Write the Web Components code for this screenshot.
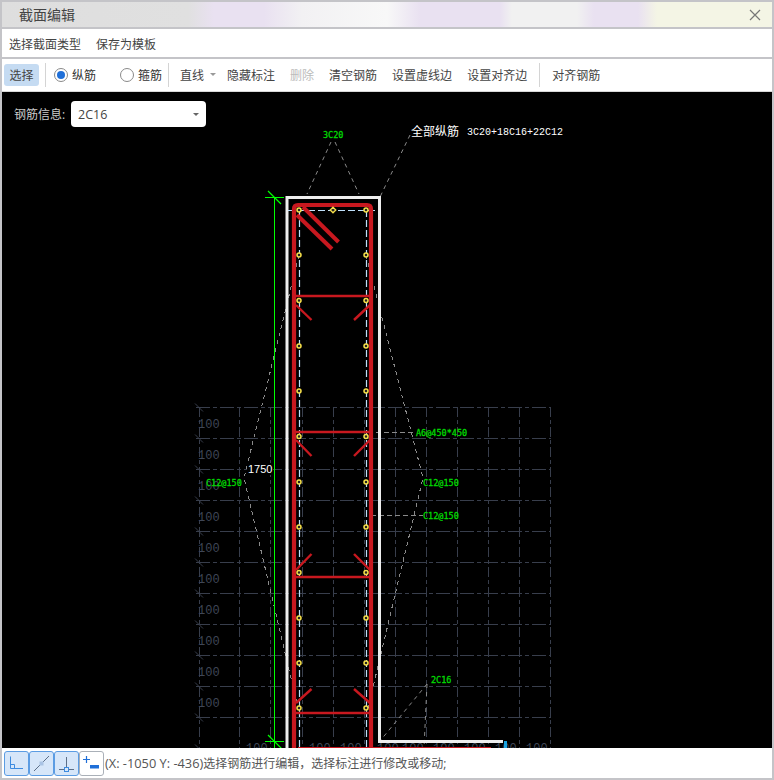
<!DOCTYPE html>
<html lang="zh">
<head>
<meta charset="utf-8">
<title>截面编辑</title>
<style>
    html, body { margin: 0; height: 100%; background: #c4c4c8; }
    body { font: 12px "Open Sans", "Noto Sans CJK SC", sans-serif; color: #444; overflow: hidden; }
</style>
</head>
<body>
<section-window>
    <title-bar slot="title">截面编辑</title-bar>
    <menu-bar slot="menu">
        <span>选择截面类型</span>
        <span>保存为模板</span>
    </menu-bar>
    <tool-bar slot="tools"></tool-bar>
    <section-canvas slot="canvas"></section-canvas>
    <status-bar slot="status"></status-bar>
</section-window>

<script>
class SectionWindow extends HTMLElement {
    constructor() {
        super();
        this.attachShadow({ mode: 'open' });
        this.shadowRoot.innerHTML = `
            <style>
                :host {
                    display: flex;
                    flex-direction: column;
                    width: 774px;
                    height: 780px;
                    box-sizing: border-box;
                    border: 2px solid #c4c4c8;
                    background: #c4c4c8;
                }
                ::slotted([slot="title"]) { margin-bottom: 2px; }
                ::slotted([slot="menu"]) { margin-bottom: 2px; }
            </style>
            <slot name="title"></slot>
            <slot name="menu"></slot>
            <slot name="tools"></slot>
            <slot name="canvas"></slot>
            <slot name="status"></slot>
        `;
    }
}

class TitleBar extends HTMLElement {
    constructor() {
        super();
        this.attachShadow({ mode: 'open' });
        this.shadowRoot.innerHTML = `
            <style>
                :host {
                    display: flex;
                    align-items: center;
                    justify-content: space-between;
                    height: 25px;
                    padding: 0 11px 0 17px;
                    font-size: 14px;
                    color: #444;
                    background: linear-gradient(90deg, #dedede 0, #e0e0e0 186px, #e9e1f1 212px, #e9e1f1 262px,
                        #f2f1f3 300px, #f8f8f8 385px, #e9e1f1 418px, #e9e1f1 498px, #f1f1f1 510px, #f1f1f1 575px,
                        #e9e1f1 592px, #e9e1f1 636px, #f4f5e5 655px, #f4f5e5 772px);
                }
                .text { transform: translateY(-1px); }
                svg { display: block; }
            </style>
            <span class="text"><slot></slot></span>
            <svg width="12" height="12" viewBox="0 0 12 12"><path d="M1 1 11 11M11 1 1 11" stroke="#777" stroke-width="1.2" fill="none"/></svg>
        `;
    }
}

class MenuBar extends HTMLElement {
    constructor() {
        super();
        this.attachShadow({ mode: 'open' });
        this.shadowRoot.innerHTML = `
            <style>
                :host {
                    display: flex;
                    align-items: center;
                    gap: 15px;
                    height: 28px;
                    box-sizing: border-box;
                    padding: 2px 7px 0;
                    background: #fff;
                    color: #444;
                }
            </style>
            <slot></slot>
        `;
    }
}

class ToolBtn extends HTMLElement {
    constructor() {
        super();
        this.attachShadow({ mode: 'open' });
        this.shadowRoot.innerHTML = `
            <style>
                :host {
                    display: flex;
                    align-items: center;
                    height: 22px;
                    color: #444;
                    white-space: nowrap;
                }
                :host([active]) { background: #c5dbf2; border-radius: 3px; padding: 0 5.5px; }
                :host([disabled]) { color: #bbb; }
            </style>
            <slot></slot>
        `;
    }
}

class RadioOpt extends HTMLElement {
    constructor() {
        super();
        this.attachShadow({ mode: 'open' });
        this.shadowRoot.innerHTML = `
            <style>
                :host { display: flex; align-items: center; gap: 4px; color: #333; white-space: nowrap; }
                i {
                    width: 14px;
                    height: 14px;
                    box-sizing: border-box;
                    border: 1px solid #8a8a8a;
                    border-radius: 50%;
                    background: #fff;
                    display: flex;
                    align-items: center;
                    justify-content: center;
                }
                :host([checked]) i::after {
                    content: '';
                    width: 8px;
                    height: 8px;
                    border-radius: 50%;
                    background: #1f6fd8;
                }
            </style>
            <i></i><slot></slot>
        `;
    }
}

class ToolBar extends HTMLElement {
    constructor() {
        super();
        this.attachShadow({ mode: 'open' });
        this.shadowRoot.innerHTML = `
            <style>
                :host {
                    display: flex;
                    align-items: center;
                    height: 32px;
                    padding: 0 0 0 2px;
                    background: #fff;
                    border-bottom: 1px solid #d8d8d8;
                }
                .sep { width: 1px; height: 24px; background: #d4d4d4; margin: 0 6px; }
                .group { display: flex; align-items: center; gap: 15px; }
                .radios { display: flex; gap: 24px; margin-left: 2px; }
                .caret {
                    display: inline-block;
                    margin-left: 6px;
                    border: 3px solid transparent;
                    border-top: 3px solid #999;
                    border-bottom: 0;
                    transform: translateY(-1px);
                }
                .line { margin-right: -4px; }
                .first { margin-left: 5px; }
                .last { margin-left: 6px; }
            </style>
            <tool-btn active>选择</tool-btn>
            <div class="sep"></div>
            <div class="radios">
                <radio-opt checked>纵筋</radio-opt>
                <radio-opt>箍筋</radio-opt>
            </div>
            <div class="sep"></div>
            <div class="group first">
                <tool-btn class="line">直线<span class="caret"></span></tool-btn>
                <tool-btn>隐藏标注</tool-btn>
                <tool-btn disabled>删除</tool-btn>
                <tool-btn>清空钢筋</tool-btn>
                <tool-btn>设置虚线边</tool-btn>
                <tool-btn>设置对齐边</tool-btn>
            </div>
            <div class="sep" style="margin-left:12px"></div>
            <div class="group last"><tool-btn>对齐钢筋</tool-btn></div>
        `;
    }
}

class RebarSelect extends HTMLElement {
    constructor() {
        super();
        this.attachShadow({ mode: 'open' });
        this.shadowRoot.innerHTML = `
            <style>
                :host {
                    position: absolute;
                    left: 12px;
                    top: 9px;
                    display: flex;
                    align-items: center;
                    color: #ccc;
                    font-size: 12px;
                }
                .label { width: 57px; white-space: nowrap; }
                .box {
                    width: 135px;
                    height: 26px;
                    box-sizing: border-box;
                    padding: 0 7px 0 7px;
                    background: #fff;
                    border-radius: 4px;
                    display: flex;
                    align-items: center;
                    justify-content: space-between;
                    color: #444;
                    font-size: 12.5px;
                }
                .caret { border: 3px solid transparent; border-top: 3px solid #666; border-bottom: 0; }
            </style>
            <span class="label"><slot></slot></span>
            <div class="box"><span>2C16</span><span class="caret"></span></div>
        `;
    }
}

// 截面图: 坐标直接用截图里的像素坐标, viewBox 偏移到画布左上角
const RED = '#c8181f';
const GRID = '#383e4c';
const LEADER = '#8a8a8a';
const HOOP_YS = [210, 255, 300.5, 346, 391, 436.5, 482, 527, 572.5, 618, 663, 708];

function line(x1, y1, x2, y2, stroke, width, dash) {
    const d = dash ? ` stroke-dasharray="${dash}"` : '';
    return `<line x1="${x1}" y1="${y1}" x2="${x2}" y2="${y2}" stroke="${stroke}" stroke-width="${width}"${d}/>`;
}

function buildGrid() {
    let out = '';
    const xs = [199, 239, 270, 302, 333, 364, 395, 426, 457, 488, 519, 550];
    for (const x of xs) out += line(x + 0.5, 407, x + 0.5, 760, GRID, 1, '10 3 4 3');
    for (let i = 0; i < 12; i++) {
        const y = 407.5 + i * 31;
        out += line(196, y, 551, y, GRID, 1, '14 3 4 3');
        out += line(195, y - 4, 203, y + 4, GRID, 1);
    }
    for (let i = 0; i < 10; i++) {
        const y = 428 + i * 31.05;
        out += `<text x="198" y="${y}" class="dim">100</text>`;
    }
    for (const x of [246, 309, 340, 377, 402, 433, 464, 495, 526]) {
        out += `<text x="${x}" y="752" class="dim">100</text>`;
    }
    return out;
}

function buildLeaders() {
    const dash = '4 4';
    return [
        line(331, 142, 307, 194, LEADER, 1, dash),
        line(335, 142, 359, 194, LEADER, 1, dash),
        line(410, 135, 380, 197, LEADER, 1, dash),
        `<polyline points="299,255 244,478 298,708" fill="none" stroke="${LEADER}" stroke-dasharray="${dash}"/>`,
        `<polyline points="366,255 423,478 368,708" fill="none" stroke="${LEADER}" stroke-dasharray="${dash}"/>`,
        line(296, 432.5, 416, 432.5, LEADER, 1, '5 3'),
        line(371, 515.5, 423, 515.5, LEADER, 1, '5 3'),
        line(427, 684, 380, 741, LEADER, 1, dash),
        line(427, 684, 424, 748, LEADER, 1, dash),
    ].join('');
}

function buildRebar() {
    let out = '';
    // 箍筋虚线
    const blue = '#c0e0fa';
    out += line(288, 210.5, 378, 210.5, blue, 1, '7 3');
    out += line(299.5, 210, 299.5, 750, blue, 1.2, '7 3');
    out += line(366.5, 210, 366.5, 750, blue, 1.2, '7 3');
    // 主筋
    out += `<path d="M294 750V209Q294 205 298 205H367Q371 205 371 209V750" fill="none" stroke="${RED}" stroke-width="4.2"/>`;
    out += line(297, 215, 332, 249, RED, 4);
    out += line(303, 207, 338.5, 242, RED, 4);
    out += `<rect x="298" y="746.5" width="193" height="2" fill="${RED}"/>`;
    // 拉筋
    const ties = [[296, 305, 320], [432, 440, 456], [577, 570, 554], [713, 703, 689]];
    for (const [y, y1, y2] of ties) {
        out += line(296, y, 370, y, RED, 2.4);
        out += line(296, y1, 311.5, y2, RED, 2.4);
        out += line(370, y1, 354, y2, RED, 2.4);
    }
    // 纵筋点
    for (const y of HOOP_YS) {
        for (const x of [299, 366]) {
            out += `<circle cx="${x}" cy="${y}" r="2" fill="#222" stroke="#f7e04a" stroke-width="1.5"/>`;
        }
    }
    out += `<path d="M333 207.2 335.8 210 333 212.8 330.2 210Z" fill="#222" stroke="#f7e04a" stroke-width="1.3"/>`;
    return out;
}

function buildDims() {
    let out = '';
    const green = '#00ff00';
    out += line(274.5, 197, 274.5, 750, green, 1);
    out += line(265, 197.5, 284, 197.5, green, 1);
    out += line(268, 191, 281, 204, green, 1.2);
    out += line(265, 741.5, 284, 741.5, green, 1);
    out += line(268, 735, 282, 749, green, 1.2);
    out += `<path d="M287 750V197.5H379.5V741.5H503" fill="none" stroke="#eee" stroke-width="3"/>`;
    out += `<rect x="504" y="741" width="3" height="8" fill="#1aa3e0"/>`;
    return out;
}

function buildLabels() {
    const labels = [
        [323, 138, '3C20'], [206, 486, 'C12@150'], [423, 486, 'C12@150'],
        [423, 519, 'C12@150'], [416, 436, 'A6@450*450'], [431, 683, '2C16'],
    ];
    let out = labels.map(([x, y, t]) => `<text x="${x}" y="${y}" class="tag">${t}</text>`).join('');
    out += `<rect x="247" y="463" width="26" height="12" fill="#000"/>`;
    out += `<text x="248" y="473" class="len">1750</text>`;
    out += `<text x="411" y="136" class="all">全部纵筋</text>`;
    out += `<text x="467" y="135" class="sum">3C20+18C16+22C12</text>`;
    return out;
}

class SectionCanvas extends HTMLElement {
    constructor() {
        super();
        this.attachShadow({ mode: 'open' });
        this.shadowRoot.innerHTML = `
            <style>
                :host {
                    display: block;
                    position: relative;
                    flex: 1;
                    min-height: 0;
                    background: #000;
                    overflow: hidden;
                }
                svg { display: block; position: absolute; left: 0; top: 0; shape-rendering: crispEdges; }
                circle, path, line { shape-rendering: geometricPrecision; }
                text { shape-rendering: auto; }
                .dim { font: 12px "Liberation Mono", monospace; fill: #3f4656; }
                .tag { font: 8.5px "DejaVu Sans Mono", monospace; fill: #00d800; stroke: #00d800; stroke-width: 0.3px; }
                .len { font: 11px "Liberation Sans", sans-serif; fill: #fff; }
                .all { font: 12px "Noto Sans CJK SC", sans-serif; fill: #fff; }
                .sum { font: 10px "Liberation Mono", monospace; fill: #fff; }
            </style>
            <svg width="770" height="656" viewBox="2 92 770 656">
                ${buildGrid()}${buildLeaders()}${buildDims()}${buildRebar()}${buildLabels()}
            </svg>
            <rebar-select>钢筋信息:</rebar-select>
        `;
    }
}

class SnapBtn extends HTMLElement {
    constructor() {
        super();
        this.attachShadow({ mode: 'open' });
        this.shadowRoot.innerHTML = `
            <style>
                :host {
                    display: block;
                    width: 25px;
                    height: 25px;
                    box-sizing: border-box;
                    border: 1px solid #aab0b8;
                    border-radius: 3px;
                    background: #fff;
                }
                :host([on]) { background: #d6e6f9; border-color: #5b9ce3; }
                svg { display: block; }
            </style>
            <slot></slot>
        `;
    }
}

class StatusBar extends HTMLElement {
    constructor() {
        super();
        this.attachShadow({ mode: 'open' });
        this.shadowRoot.innerHTML = `
            <style>
                :host {
                    display: flex;
                    align-items: center;
                    height: 30px;
                    padding: 0 0 0 2px;
                    background: #fff;
                    color: #555;
                    white-space: nowrap;
                }
                .btns { display: flex; margin-right: 1px; margin-top: 1px; }
                .coord { font-size: 12.8px; }
                svg { display: block; }
            </style>
            <div class="btns">
                <snap-btn on><svg width="23" height="23" viewBox="0 0 23 23" fill="none" stroke="#3d8be0">
                    <path d="M5.5 4.5V16.5H18M5.5 12.5H9.5V16.5"/></svg></snap-btn>
                <snap-btn on><svg width="23" height="23" viewBox="0 0 23 23" fill="none">
                    <path d="M4 19 19 4" stroke="#5c6f88"/><rect x="9.5" y="9.5" width="4" height="4" fill="#a9c3e4"/></svg></snap-btn>
                <snap-btn on><svg width="23" height="23" viewBox="0 0 23 23" fill="none" stroke="#5c6f88">
                    <path d="M11.5 5V17M4 17.5H19"/><rect x="9.5" y="15.5" width="4" height="4" fill="#d6e6f9" stroke="#3d8be0"/></svg></snap-btn>
                <snap-btn><svg width="23" height="23" viewBox="0 0 23 23" fill="none">
                    <path d="M6.5 4V11M3 7.5H10" stroke="#1f6fd8" stroke-width="1.2"/><rect x="10" y="13" width="9" height="3.5" fill="#1f6fd8"/></svg></snap-btn>
            </div>
            <span><span class="coord">(X: -1050 Y: -436)</span>选择钢筋进行编辑，选择标注进行修改或移动;</span>
        `;
    }
}

customElements.define('section-window', SectionWindow);
customElements.define('title-bar', TitleBar);
customElements.define('menu-bar', MenuBar);
customElements.define('tool-btn', ToolBtn);
customElements.define('radio-opt', RadioOpt);
customElements.define('tool-bar', ToolBar);
customElements.define('rebar-select', RebarSelect);
customElements.define('section-canvas', SectionCanvas);
customElements.define('snap-btn', SnapBtn);
customElements.define('status-bar', StatusBar);
</script>
</body>
</html>
